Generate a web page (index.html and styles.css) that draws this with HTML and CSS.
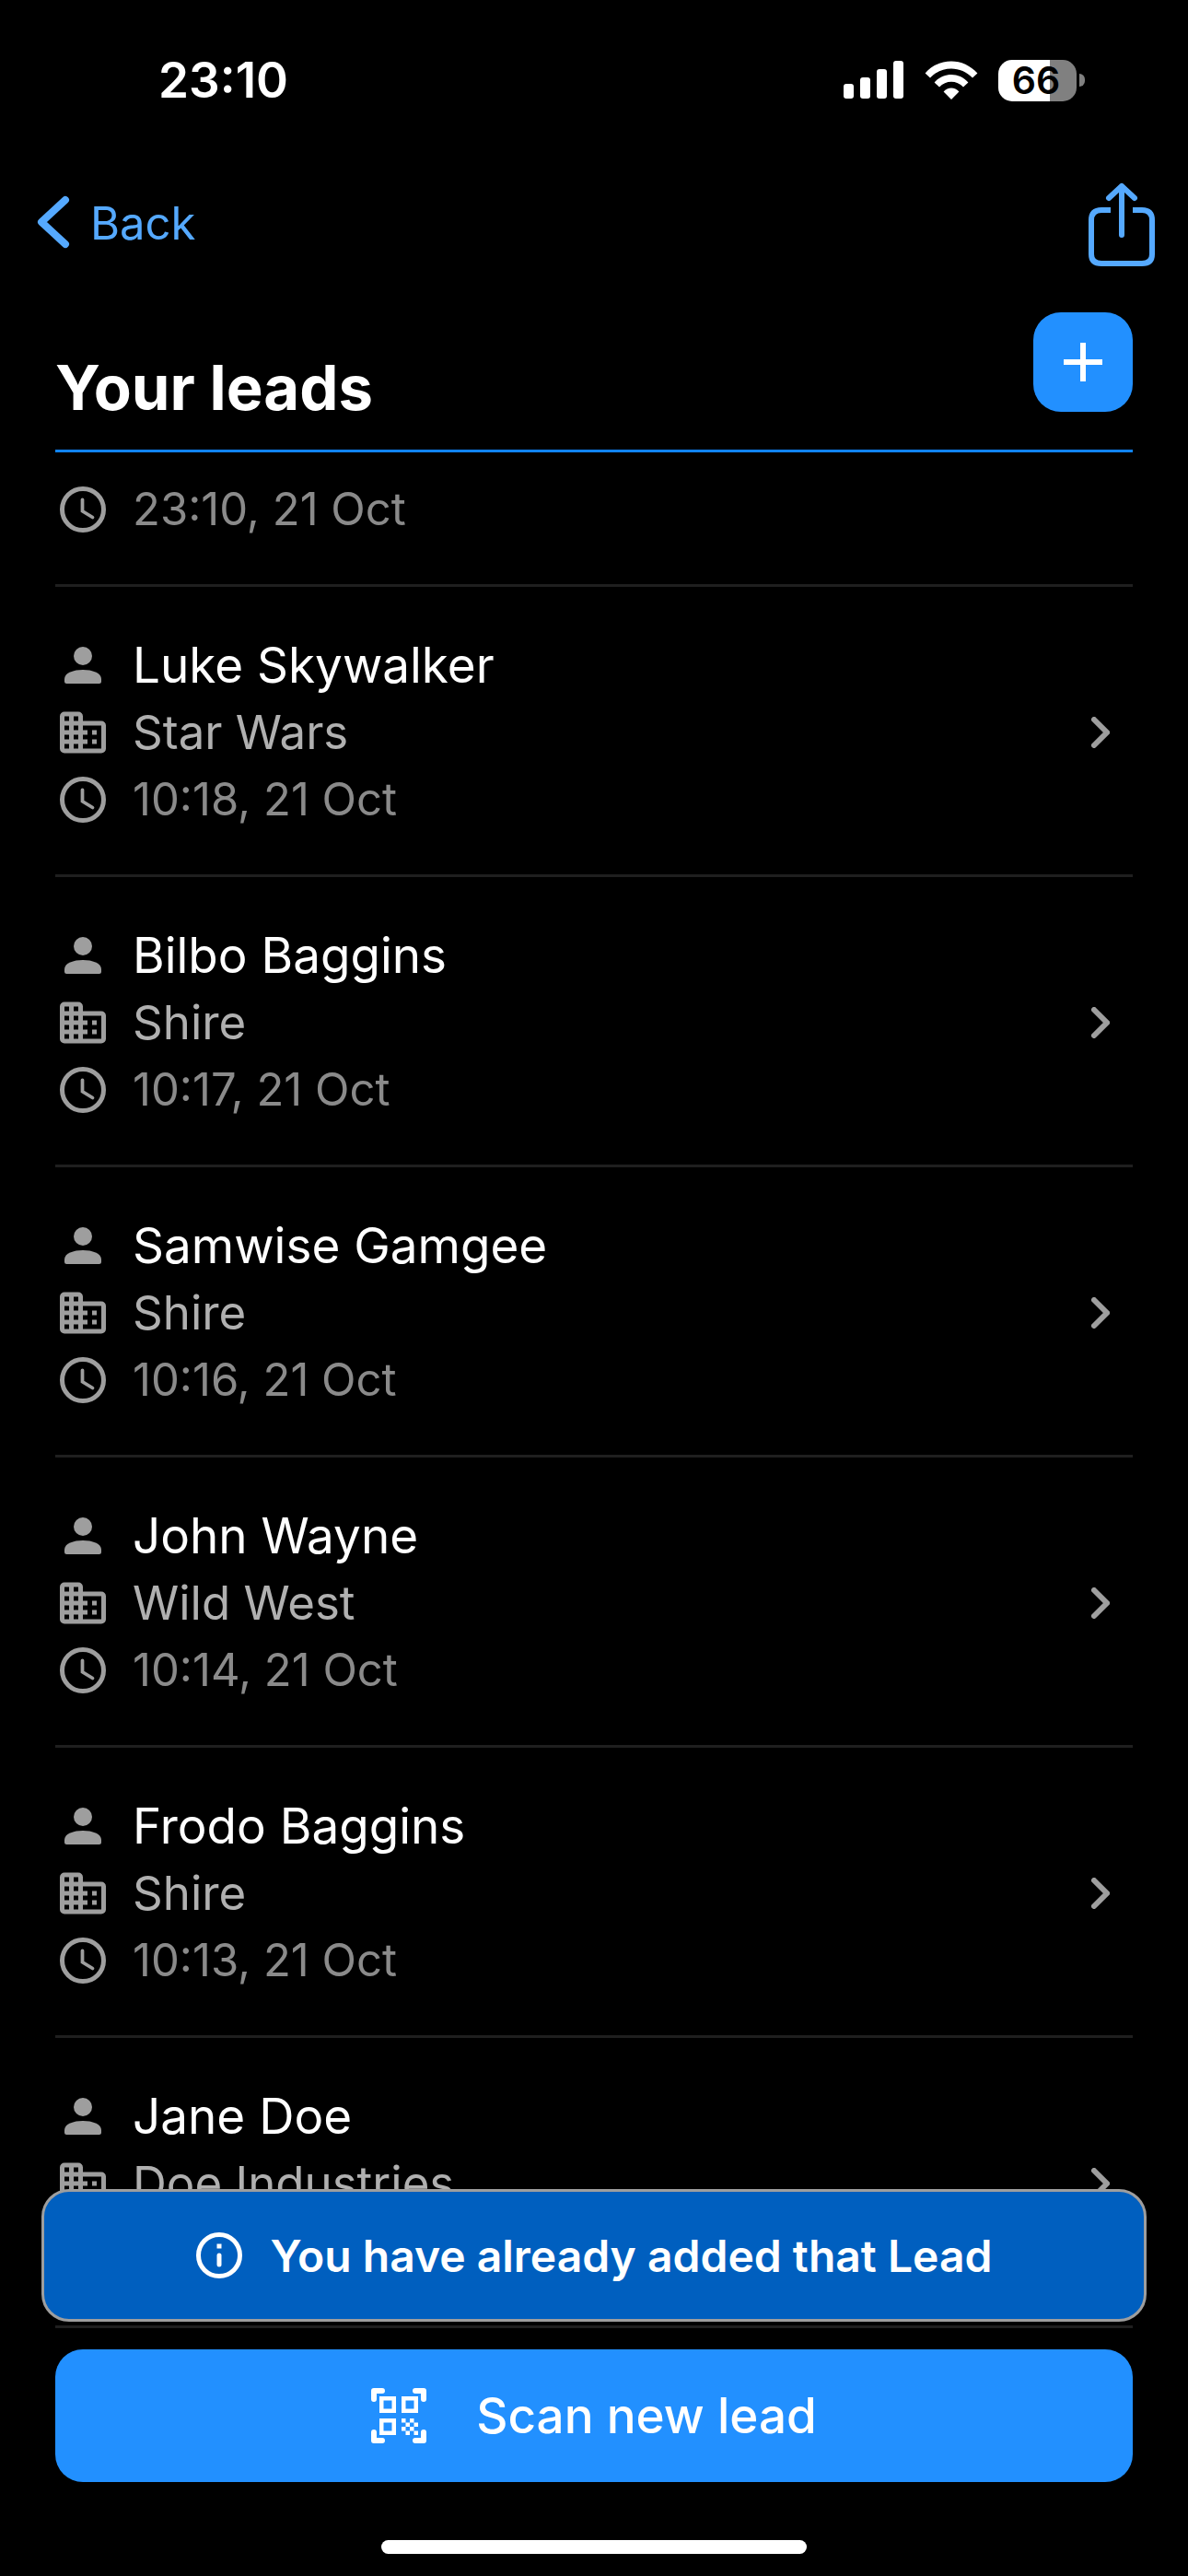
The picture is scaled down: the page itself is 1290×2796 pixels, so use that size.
FILE: index.html
```html
<!DOCTYPE html>
<html lang="en">
<head>
<meta charset="utf-8">
<meta name="viewport" content="width=device-width, initial-scale=1">
<title>Your leads</title>
<link rel="stylesheet" href="styles.css">
</head>
<body>
<svg class="sprite" aria-hidden="true">
  <symbol id="person" viewBox="0 0 24 24"><circle cx="12" cy="8" r="4"/><path d="M4 18c0-2.700 4-4 8-4s8 1.300 8 4v1a1 1 0 0 1-1 1H5a1 1 0 0 1-1-1z"/></symbol>
  <symbol id="company" viewBox="0 0 24 24"><path fill-rule="evenodd" d="M12 7V5a2 2 0 0 0-2-2H4a2 2 0 0 0-2 2v14a2 2 0 0 0 2 2h16a2 2 0 0 0 2-2V9a2 2 0 0 0-2-2zM6 19H4v-2h2zm0-4H4v-2h2zm0-4H4V9h2zm0-4H4V5h2zm4 12H8v-2h2zm0-4H8v-2h2zm0-4H8V9h2zm0-4H8V5h2zm10 12h-8v-2h2v-2h-2v-2h2v-2h-2V9h8zm-2-8h-2v2h2zm0 4h-2v2h2z"/></symbol>
  <symbol id="clock" viewBox="0 0 24 24"><circle cx="12" cy="12" r="9" fill="none" stroke="currentColor" stroke-width="2"/><path d="M11.800 7.700v5l4.400 2.700" fill="none" stroke="currentColor" stroke-width="1.500" stroke-linecap="round"/></symbol>
  <symbol id="chevron" viewBox="0 0 20 34"><path d="M3 3l14 14L3 31" fill="none" stroke="currentColor" stroke-width="6" stroke-linecap="round"/></symbol>
</svg>
<div class="screen">
  <div class="status">
    <time class="status-time">23:10</time>
    <div class="status-icons">
      <svg width="66" height="42" viewBox="0 0 66 42" fill="#fff"><rect y="25" width="11" height="16" rx="3"/><rect x="18" y="18" width="11" height="23" rx="3"/><rect x="36" y="9" width="11" height="32" rx="3"/><rect x="54" width="11" height="41" rx="3"/></svg>
      <svg width="58" height="42" viewBox="0 0 58 42" fill="#fff"><path d="M.6 13.500C16-4 42-4 57.400 13.500L52 18.500C39.500 5 18.500 5 6 18.500z"/><path d="M10.600 23.500c10-11.300 26.800-11.300 36.800 0l-5.400 5c-7-7.600-19-7.600-26 0z"/><path d="M20.600 33.500c4.600-5.200 12.200-5.200 16.800 0L29 42z"/></svg>
      <div class="battery"><span class="battery-body">66</span><span class="battery-cap"></span></div>
    </div>
  </div>
  <nav class="nav">
    <a class="back" href="#">
      <svg width="36" height="62" viewBox="0 0 36 62"><path d="M31 5L5 29l26 24" fill="none" stroke="currentColor" stroke-width="8" stroke-linecap="round" stroke-linejoin="round"/></svg>
      <span>Back</span>
    </a>
    <button class="share" type="button" aria-label="Share">
      <svg width="72" height="92" viewBox="0 0 72 92" fill="none" stroke="currentColor" stroke-width="6"><path d="M24 31H14Q3 31 3 42V79Q3 89 14 89H58Q69 89 69 79V42Q69 31 58 31H48"/><path d="M36 58V5M22 18L36 5L50 18" stroke-linecap="round" stroke-linejoin="round"/></svg>
    </button>
  </nav>
  <header class="header">
    <h1 class="title">Your leads</h1>
    <button class="add" type="button" aria-label="Add lead"><svg width="42" height="42" viewBox="0 0 42 42"><path d="M21 0v42M0 21h42" stroke="#fff" stroke-width="6"/></svg></button>
  </header>
  <main>
    <ul class="leads">
      <li class="lead lead-scrolled">
        <div class="lead-info"><p class="row time"><svg class="icon"><use href="#clock"/></svg>23:10, 21 Oct</p></div>
      </li>
      <li><a class="lead" href="#">
        <div class="lead-info">
          <p class="row name"><svg class="icon"><use href="#person"/></svg>Luke Skywalker</p>
          <p class="row company"><svg class="icon"><use href="#company"/></svg>Star Wars</p>
          <p class="row time"><svg class="icon"><use href="#clock"/></svg>10:18, 21 Oct</p>
        </div>
        <svg class="chevron"><use href="#chevron"/></svg>
      </a></li>
      <li><a class="lead" href="#">
        <div class="lead-info">
          <p class="row name"><svg class="icon"><use href="#person"/></svg>Bilbo Baggins</p>
          <p class="row company"><svg class="icon"><use href="#company"/></svg>Shire</p>
          <p class="row time"><svg class="icon"><use href="#clock"/></svg>10:17, 21 Oct</p>
        </div>
        <svg class="chevron"><use href="#chevron"/></svg>
      </a></li>
      <li><a class="lead" href="#">
        <div class="lead-info">
          <p class="row name"><svg class="icon"><use href="#person"/></svg>Samwise Gamgee</p>
          <p class="row company"><svg class="icon"><use href="#company"/></svg>Shire</p>
          <p class="row time"><svg class="icon"><use href="#clock"/></svg>10:16, 21 Oct</p>
        </div>
        <svg class="chevron"><use href="#chevron"/></svg>
      </a></li>
      <li><a class="lead" href="#">
        <div class="lead-info">
          <p class="row name"><svg class="icon"><use href="#person"/></svg>John Wayne</p>
          <p class="row company"><svg class="icon"><use href="#company"/></svg>Wild West</p>
          <p class="row time"><svg class="icon"><use href="#clock"/></svg>10:14, 21 Oct</p>
        </div>
        <svg class="chevron"><use href="#chevron"/></svg>
      </a></li>
      <li><a class="lead" href="#">
        <div class="lead-info">
          <p class="row name"><svg class="icon"><use href="#person"/></svg>Frodo Baggins</p>
          <p class="row company"><svg class="icon"><use href="#company"/></svg>Shire</p>
          <p class="row time"><svg class="icon"><use href="#clock"/></svg>10:13, 21 Oct</p>
        </div>
        <svg class="chevron"><use href="#chevron"/></svg>
      </a></li>
      <li><a class="lead" href="#">
        <div class="lead-info">
          <p class="row name"><svg class="icon"><use href="#person"/></svg>Jane Doe</p>
          <p class="row company"><svg class="icon"><use href="#company"/></svg>Doe Industries</p>
          <p class="row time"><svg class="icon"><use href="#clock"/></svg></p>
        </div>
        <svg class="chevron"><use href="#chevron"/></svg>
      </a></li>
    </ul>
  </main>
  <footer class="footer">
    <div class="toast" role="status">
      <svg width="50" height="50" viewBox="0 0 50 50"><circle cx="25" cy="25" r="22.500" fill="none" stroke="#fff" stroke-width="5"/><path d="M25 25v10" stroke="#fff" stroke-width="5" stroke-linecap="round"/><rect x="22.500" y="12.500" width="5" height="5" fill="#fff"/></svg>
      <span>You have already added that Lead</span>
    </div>
    <button class="scan" type="button">
      <svg width="60" height="60" viewBox="0 0 60 60" fill="none" stroke="#fff"><path d="M3 12V3h9M48 3h9v9M57 48v9h-9M12 57H3v-9" stroke-width="6" stroke-linecap="round" stroke-linejoin="round"/><path d="M11.250 11.250h13.500v13.500H11.250zM35.250 11.250h13.500v13.500H35.250zM11.250 35.250h13.500v13.500H11.250z" stroke-width="4.500"/><path d="M33 33h4.500v4.500h-4.500zM42 33h4.500v4.500h-4.500zM37.500 37.500h4.500v4.500h-4.500zM46.500 37.500h4.500v4.500h-4.500zM33 42h4.500v4.500h-4.500zM42 42h4.500v4.500h-4.500zM37.500 46.500h4.500v4.500h-4.500zM46.500 46.500h4.500v4.500h-4.500z" fill="#fff" stroke="none"/></svg>
      <span>Scan new lead</span>
    </button>
    <div class="home"></div>
  </footer>
</div>
</body>
</html>
```
FILE: styles.css
```css
* { box-sizing: border-box; }
body { margin: 0; background: #000; color: #fff; font-family: Inter, "Liberation Sans", sans-serif; }
h1, p, ul { margin: 0; padding: 0; }
ul { list-style: none; }
svg { display: block; flex: none; }
button { border: 0; padding: 0; font: inherit; color: inherit; background: none; cursor: pointer; }
a { color: inherit; text-decoration: none; }
.sprite { position: absolute; width: 0; height: 0; }

.screen { min-height: 100vh; display: flex; flex-direction: column; }
.status { display: flex; align-items: center; justify-content: space-between; height: 174px; padding: 0 112px 0 172px; }
.status-time { font-size: 53px; line-height: 62px; font-weight: 600; }
.status-icons { display: flex; align-items: center; gap: 22px; }
.battery { display: flex; align-items: center; gap: 3px; }
.battery-body { width: 85px; height: 45px; padding-right: 3px; border-radius: 15px; background: linear-gradient(90deg, #fff 66%, #808080 66%); color: #000; font-size: 41px; line-height: 45px; font-weight: 600; text-align: center; }
.battery-cap { width: 6px; height: 14px; border-radius: 0 6px 6px 0; background: #808080; }

.nav { display: flex; align-items: center; justify-content: space-between; height: 138px; padding: 0 36px 0 40px; color: #55a9ff; }
.back { display: flex; align-items: center; gap: 22px; font-size: 49px; line-height: 60px; }

.header { display: flex; align-items: flex-start; justify-content: space-between; margin: 0 60px; padding: 27px 0 32px; border-bottom: 3px solid #1083ff; }
.title { padding-top: 46px; font-size: 67px; line-height: 72px; font-weight: 700; }
.header { align-items: flex-start; height: 179px; }
.add { display: flex; align-items: center; justify-content: center; width: 108px; height: 108px; border-radius: 30px; background: #2290ff; }

.leads { margin: 0 60px; }
.lead { display: flex; align-items: center; justify-content: space-between; padding: 48px 25px 45px 0; border-bottom: 3px solid #1f1f1f; }
.lead-scrolled { padding-top: 25px; }
.row { display: flex; align-items: center; gap: 24px; height: 73px; }
.icon { width: 60px; height: 60px; color: #9e9e9e; fill: #9e9e9e; }
.name { font-size: 53px; }
.company { font-size: 51px; color: #b0b0b0; }
.time { font-size: 49px; color: #8a8a8a; }
.chevron { width: 20px; height: 34px; color: #9e9e9e; }

.footer { position: relative; margin-top: auto; padding: 23px 60px 24px; }
.toast { position: absolute; left: 45px; right: 45px; bottom: calc(100% + 7px); display: flex; align-items: center; justify-content: center; gap: 31px; height: 144px; border: 3px solid #9e9e9e; border-radius: 30px; background: #005fbf; font-size: 48px; font-weight: 600; }
.scan { display: flex; align-items: center; justify-content: center; gap: 54px; width: 100%; height: 144px; border-radius: 30px; background: #2290ff; font-size: 53px; font-weight: 500; }
.home { width: 462px; height: 15px; margin: 63px auto 0; border-radius: 8px; background: #fff; }
```
